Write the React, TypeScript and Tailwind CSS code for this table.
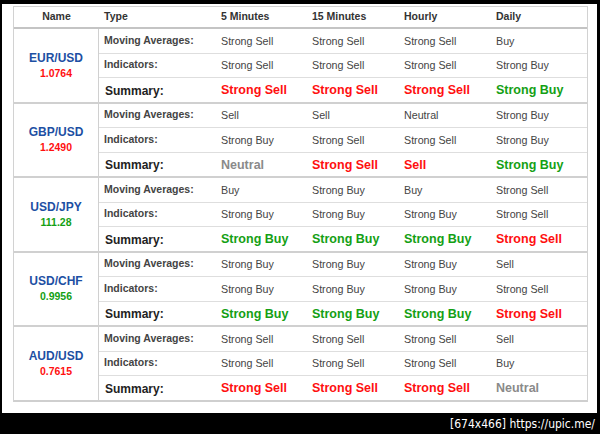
import React from 'react';

type Signal = 'Strong Sell' | 'Sell' | 'Neutral' | 'Buy' | 'Strong Buy';

interface Pair {
  name: string;
  price: string;
  up: boolean;
  ma: Signal[];
  ind: Signal[];
  sum: Signal[];
}

const pairs: Pair[] = [
  {
    name: 'EUR/USD', price: '1.0764', up: false,
    ma: ['Strong Sell', 'Strong Sell', 'Strong Sell', 'Buy'],
    ind: ['Strong Sell', 'Strong Sell', 'Strong Sell', 'Strong Buy'],
    sum: ['Strong Sell', 'Strong Sell', 'Strong Sell', 'Strong Buy'],
  },
  {
    name: 'GBP/USD', price: '1.2490', up: false,
    ma: ['Sell', 'Sell', 'Neutral', 'Strong Buy'],
    ind: ['Strong Buy', 'Strong Sell', 'Strong Sell', 'Strong Buy'],
    sum: ['Neutral', 'Strong Sell', 'Sell', 'Strong Buy'],
  },
  {
    name: 'USD/JPY', price: '111.28', up: true,
    ma: ['Buy', 'Strong Buy', 'Buy', 'Strong Sell'],
    ind: ['Strong Buy', 'Strong Buy', 'Strong Buy', 'Strong Sell'],
    sum: ['Strong Buy', 'Strong Buy', 'Strong Buy', 'Strong Sell'],
  },
  {
    name: 'USD/CHF', price: '0.9956', up: true,
    ma: ['Strong Buy', 'Strong Buy', 'Strong Buy', 'Sell'],
    ind: ['Strong Buy', 'Strong Buy', 'Strong Buy', 'Strong Sell'],
    sum: ['Strong Buy', 'Strong Buy', 'Strong Buy', 'Strong Sell'],
  },
  {
    name: 'AUD/USD', price: '0.7615', up: false,
    ma: ['Strong Sell', 'Strong Sell', 'Strong Sell', 'Sell'],
    ind: ['Strong Sell', 'Strong Sell', 'Strong Sell', 'Buy'],
    sum: ['Strong Sell', 'Strong Sell', 'Strong Sell', 'Neutral'],
  },
];

const cols = 'grid grid-cols-[117px_91px_92px_92px_1fr]';

const sumColor = (s: Signal) => {
  if (s === 'Strong Sell' || s === 'Sell') return 'text-[#ff1010]';
  if (s === 'Strong Buy' || s === 'Buy') return 'text-[#14a014]';
  return 'text-[#8a8a8a]';
};

const Row = ({ label, values, summary, last }: { label: string; values: Signal[]; summary?: boolean; last?: boolean }) => (
  <div className={`${cols} items-center ${last ? 'h-[23.5px] pt-[2px]' : 'h-[24.5px] border-b border-[#dedede]'}`}>
    <div className={`font-bold ${summary ? 'text-[12px] text-[#222] pl-[6px]' : 'text-[10.5px] text-[#444] pl-[5px]'}`}>{label}</div>
    {values.map((v, i) => (
      <div
        key={i}
        className={summary ? `pl-[5px] font-bold text-[12.5px] ${sumColor(v)}` : 'pl-[5px] text-[10.7px] text-[#444]'}
      >
        {v}
      </div>
    ))}
  </div>
);

export default function App() {
  return (
    <div className="w-[600px] h-[434px] bg-black flex flex-col overflow-hidden" style={{ fontFamily: '"Liberation Sans", Arial, sans-serif' }}>
      <div className="mt-[4px] ml-[2px] mr-[3px] h-[409px] bg-white pl-[11px] pr-[9px] pt-[2px]">
        <div className="border border-[#d2d2d2] border-b-2 border-b-[#cfcfcf]">
          {/* Header */}
          <div className="flex h-[22px] items-center border-b-2 border-[#c4c4c4] text-[10.5px] font-bold text-[#333]">
            <div className="w-[85px] text-center">Name</div>
            <div className={`${cols} flex-1`}>
              <div className="pl-[5px]">Type</div>
              <div className="pl-[5px]">5 Minutes</div>
              <div className="pl-[5px]">15 Minutes</div>
              <div className="pl-[5px]">Hourly</div>
              <div className="pl-[5px]">Daily</div>
            </div>
          </div>

          {pairs.map((p, i) => (
            <div key={p.name} className={`flex ${i < pairs.length - 1 ? 'border-b-2 border-[#d0d0d0]' : ''}`}>
              <div className="w-[85px] flex flex-col items-center justify-center border-r border-[#d0d0d0] font-bold">
                <div className="text-[12px] text-[#1d4fa3] leading-[15px]">{p.name}</div>
                <div className={`text-[10.5px] leading-[14px] ${p.up ? 'text-[#14a014]' : 'text-[#ff1010]'}`}>{p.price}</div>
              </div>
              <div className="flex-1">
                <Row label="Moving Averages:" values={p.ma} />
                <Row label="Indicators:" values={p.ind} />
                <Row label="Summary:" values={p.sum} summary last />
              </div>
            </div>
          ))}
        </div>
      </div>
      <div className="flex-1 flex items-center justify-end pr-[5px] text-white text-[12px] leading-none" style={{ fontFamily: '"DejaVu Sans Condensed", "Liberation Sans", sans-serif' }}>
        [674x466] https://upic.me/
      </div>
    </div>
  );
}
